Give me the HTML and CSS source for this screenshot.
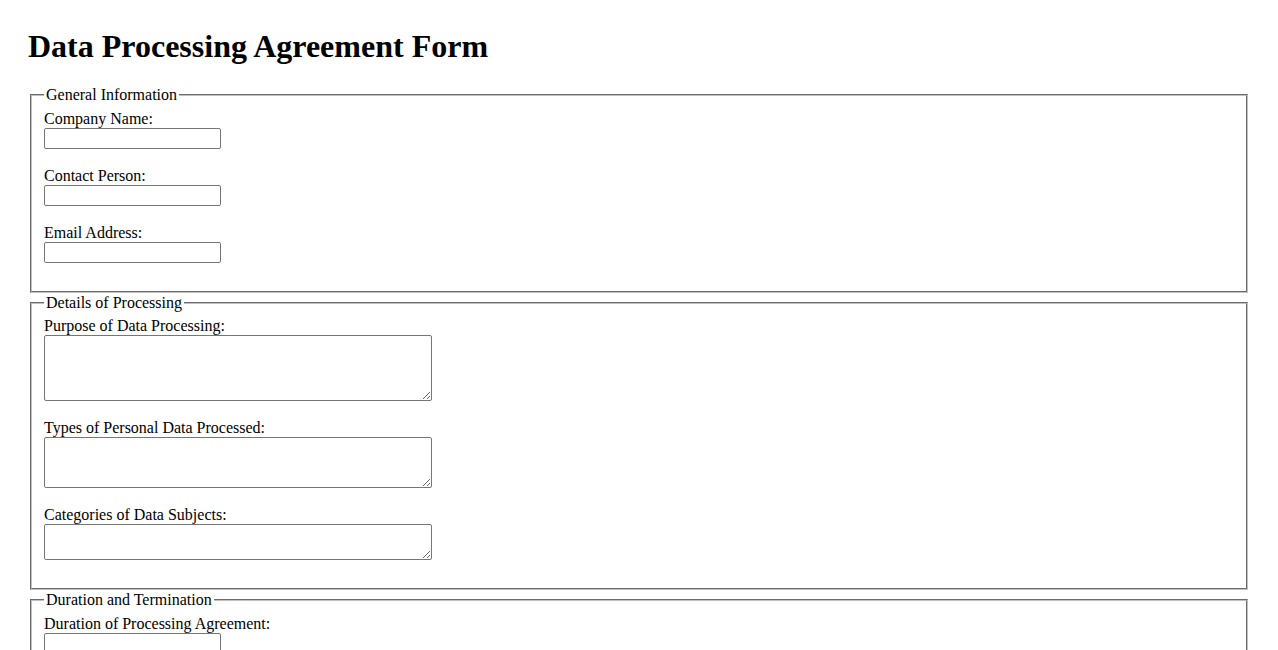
FILE: index.html
```html
<!DOCTYPE html>
<html lang="en">

<head>
    <meta charset="UTF-8">
    <meta name="viewport" content="width=device-width, initial-scale=1.0">
    <title>Data Processing Agreement Form</title>
    <link rel="stylesheet" href="styles.css">
</head>

<body>
    <h1>Data Processing Agreement Form</h1>

    <form>
        <fieldset>
            <legend>General Information</legend>
            <label for="company">Company Name:</label><br>
            <input type="text" id="company" name="company"><br><br>
            <label for="contact">Contact Person:</label><br>
            <input type="text" id="contact" name="contact"><br><br>
            <label for="email">Email Address:</label><br>
            <input type="email" id="email" name="email"><br><br>
        </fieldset>

        <fieldset>
            <legend>Details of Processing</legend>
            <label for="purpose">Purpose of Data Processing:</label><br>
            <textarea id="purpose" name="purpose" class="rows-4"></textarea><br><br>
            <label for="types">Types of Personal Data Processed:</label><br>
            <textarea id="types" name="types" class="rows-3"></textarea><br><br>
            <label for="subjects">Categories of Data Subjects:</label><br>
            <textarea id="subjects" name="subjects" class="rows-2"></textarea><br><br>
        </fieldset>

        <fieldset>
            <legend>Duration and Termination</legend>
            <label for="duration">Duration of Processing Agreement:</label><br>
            <input type="text" id="duration" name="duration"><br><br>
            <label for="termination">Termination Conditions:</label><br>
            <textarea id="termination" name="termination" class="rows-4"></textarea><br><br>
        </fieldset>
    </form>
</body>

</html>
```

FILE: styles.css
```css
body {
    margin: 0;
    padding: 28px;
    font-family: "Liberation Serif", "Times New Roman", serif;
    font-size: 16px;
    color: #000;
}

h1 {
    margin: 0 0 21px;
    font-size: 32px;
}

fieldset {
    margin: 0 2px;
    padding: 5.6px 12px 10px;
    border: 2px groove #c0c0c0;
}

fieldset + fieldset {
    margin-top: 1px;
}

legend {
    padding: 0 2px;
}

input {
    width: 177px;
    height: 21px;
    box-sizing: border-box;
    font-size: 13.33px;
    border: 1px solid #767676;
    border-radius: 2px;
}

textarea {
    width: 388px;
    box-sizing: border-box;
    border: 1px solid #767676;
    border-radius: 2px;
    vertical-align: bottom;
}

.rows-4 {
    height: 66px;
}

.rows-3 {
    height: 51px;
}

.rows-2 {
    height: 36px;
}
```
